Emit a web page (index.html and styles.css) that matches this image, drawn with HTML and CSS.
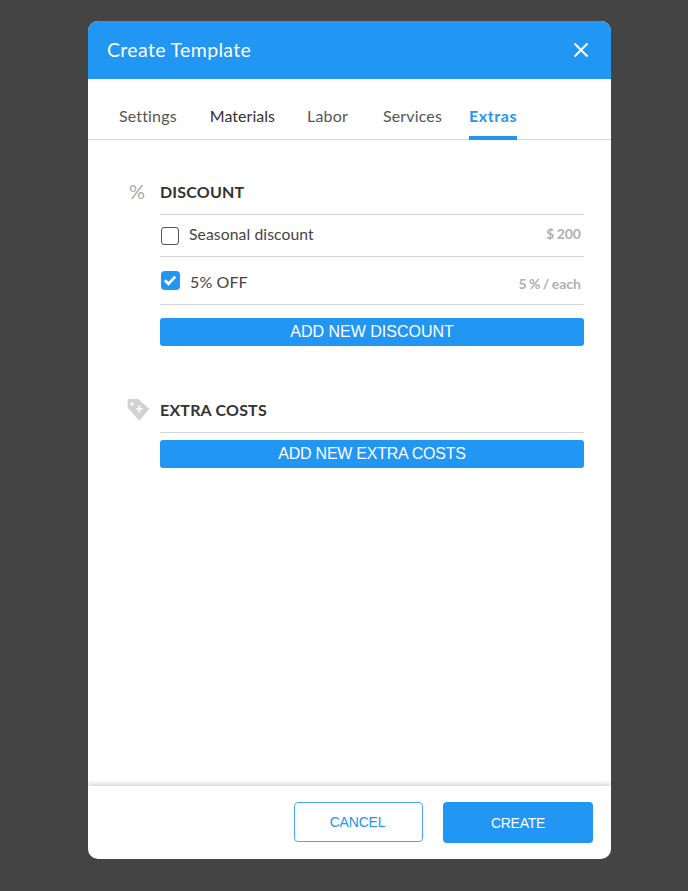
FILE: index.html
```html
<!DOCTYPE html>
<html>
<head>
<title>Create Template</title>
<link rel="stylesheet" href="styles.css">
</head>
<body>
<div class="modal">
  <div class="modal-header">
    <div class="modal-title">Create Template</div>
    <svg class="close" width="16" height="16" viewBox="0 0 16 16"><path d="M1.5 1.5L14.5 14.5M14.5 1.5L1.5 14.5" stroke="#fff" stroke-width="2" fill="none"/></svg>
  </div>
  <div class="tabs">
    <div class="tab">Settings</div>
    <div class="tab dark tab-materials">Materials</div>
    <div class="tab tab-labor">Labor</div>
    <div class="tab tab-services">Services</div>
    <div class="tab active">Extras</div>
  </div>
  <div class="modal-body">
    <div class="section discount">
      <div class="section-head">
        <div class="section-icon percent">%</div>
        <div class="section-title">DISCOUNT</div>
      </div>
      <div class="row row-first">
        <div class="check"></div>
        <div class="row-label">Seasonal discount</div>
        <div class="row-value">$ 200</div>
      </div>
      <div class="row row-second">
        <div class="check checked">
          <svg width="18" height="18" viewBox="0 0 18 18"><path d="M3.8 9.2L7.5 12.8L14.2 5.6" stroke="#fff" stroke-width="2.7" fill="none"/></svg>
        </div>
        <div class="row-label big">5% OFF</div>
        <div class="row-value">5 % / each</div>
      </div>
      <button class="add-btn">ADD NEW DISCOUNT</button>
    </div>
    <div class="section extra">
      <div class="section-head">
        <div class="section-icon">
          <svg width="24" height="24" viewBox="0 0 24 24"><path d="M1.7 2.5Q1.7 1 3.2 1H12.3L23.3 11L13.3 22.7L1.7 9.7Z" fill="#d2d2d2"/><circle cx="6" cy="6" r="1.7" fill="#fff"/><path d="M9.8 11H16.8M13.3 7.5V14.5" stroke="#fff" stroke-width="1.6"/></svg>
        </div>
        <div class="section-title">EXTRA COSTS</div>
      </div>
      <button class="add-btn">ADD NEW EXTRA COSTS</button>
    </div>
  </div>
  <div class="modal-footer">
    <button class="btn btn-cancel">CANCEL</button>
    <button class="btn btn-create">CREATE</button>
  </div>
</div>
</body>
</html>
```

FILE: styles.css
```css
html,body{height:100%}
body{margin:0;background:#444;font-family:"Lato",sans-serif;color:#333;overflow:hidden}
.modal{width:523px;height:838px;margin:21px 0 0 88px;background:#fff;border-radius:10px;display:flex;flex-direction:column;overflow:hidden}
.modal-header{height:58px;background:#2196f3;display:flex;align-items:center;justify-content:space-between;padding:0 22px 0 19px;flex-shrink:0}
.modal-title{font-size:19.5px;color:#fff;letter-spacing:.35px;margin-top:-2px}
.tabs{height:60px;border-bottom:1px solid #d8d8d8;display:flex;padding-left:31px;flex-shrink:0}
.tab{font-size:16px;line-height:16px;padding-top:29px;margin-right:33px;color:#555;height:31px;letter-spacing:.15px}
.tab.dark{color:#333;letter-spacing:.05px}
.tab-materials{margin-right:32px}
.tab-labor{margin-right:35px}
.tab-services{margin-right:27px}
.tab.active{color:#2196f3;font-weight:bold;letter-spacing:.6px;height:28px;border-bottom:4px solid #2196f3;margin-right:0}
.modal-body{flex:1;padding:0 27px 0 38px}
.section-head{display:flex;align-items:center;height:47px;margin-top:27px;border-bottom:1px solid #d5d5d5;margin-left:34px;position:relative}
.section-icon{position:absolute;left:-34px;top:13px;width:24px;height:24px;color:#aaa;text-align:center}
.percent{font-size:20px;line-height:20px;top:14px;left:-35px}
.section-title{font-size:16px;font-weight:bold;color:#333;letter-spacing:.2px;margin-top:2px}
.row{display:flex;align-items:center;margin-left:34px;border-bottom:1px solid #d5d5d5;padding:0 3px 0 1px}
.row-first{height:41px}
.row-second{height:47px}
.check{width:16px;height:16px;border:1px solid #555;border-radius:3px;margin-right:10px;flex-shrink:0}
.check.checked{width:19px;height:19px;background:#2196f3;border:none;border-radius:4px;display:flex;margin-right:10px}
.row-label{font-size:15.7px;color:#444;letter-spacing:.1px;margin-top:-3px}
.row-label.big{font-size:16px;margin-top:2px}
.row-value{margin-left:auto;font-size:14px;font-weight:bold;color:#b0b0b0;word-spacing:-1px;margin-top:-4px}
.row-second .row-value{margin-top:6px}
.add-btn{display:block;width:424px;height:28px;margin:13px 0 0 34px;background:#2196f3;border:none;border-radius:3px;color:#fff;font-family:"Liberation Sans",sans-serif;font-size:16px;padding:0}
.extra{margin-top:39px}
.extra .section-head{margin-top:0}
.extra .add-btn{margin-top:7px;letter-spacing:-.25px}
.modal-footer{height:73px;flex-shrink:0;box-shadow:0 -2px 5px rgba(0,0,0,.18);display:flex;justify-content:flex-end;align-items:flex-start;padding:16px 18px 0 0;box-sizing:border-box;gap:20px}
.btn{font-family:"Liberation Sans",sans-serif;font-size:14px;border-radius:4px;cursor:pointer;padding:0}
.btn-cancel{width:129px;height:40px;background:#fff;border:1px solid #4aa8f5;color:#2196f3;letter-spacing:-.2px;padding-right:2px}
.btn-create{width:150px;height:41px;background:#2196f3;border:none;color:#fff;letter-spacing:-.25px}
```
